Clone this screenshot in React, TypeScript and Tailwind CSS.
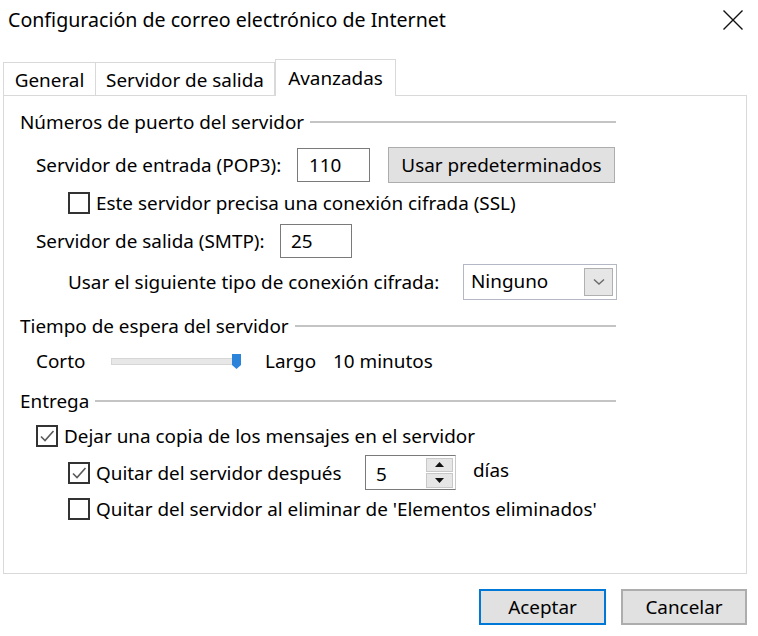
import React from "react";

const font = { fontFamily: '"Noto Sans", "Open Sans", Arial, sans-serif' };

function Check({ checked }: { checked?: boolean }) {
  return (
    <div className="w-[22px] h-[22px] border-2 border-[#333333] bg-white flex items-center justify-center shrink-0">
      {checked && (
        <svg width="16" height="16" viewBox="0 0 16 16">
          <path d="M2 8.5 L6 12.5 L14.5 3" fill="none" stroke="#5a5a5a" strokeWidth="1.6" />
        </svg>
      )}
    </div>
  );
}

function Heading({ text, mt }: { text: string; mt: string }) {
  return (
    <div className={`flex items-center h-[22px] ml-[16px] mr-[130px] ${mt}`}>
      <span>{text}</span>
      <div className="flex-1 ml-[6px] h-[2px] bg-[#c4c4c4]" />
    </div>
  );
}

export default function App() {
  return (
    <div className="w-[758px] h-[636px] bg-white text-black text-[18.9px] leading-[22px] flex flex-col" style={font}>
      {/* title bar */}
      <div className="h-[58px] flex items-start justify-between">
        <div className="ml-[8px] mt-[9px] text-[19.6px]">Configuración de correo electrónico de Internet</div>
        <svg className="mr-[14px] mt-[9px]" width="22" height="22" viewBox="0 0 22 22">
          <path d="M1.5 1.5 L20.5 20.5 M20.5 1.5 L1.5 20.5" stroke="#111" strokeWidth="1.4" />
        </svg>
      </div>
      {/* tabs */}
      <div className="flex items-end ml-[3px] h-[37px] relative z-10">
        <div className="h-[33px] w-[93px] border border-[#d9d9d9] border-b-0 flex items-center justify-center pt-[2px]">General</div>
        <div className="h-[33px] w-[179px] border border-[#d9d9d9] border-b-0 border-l-0 flex items-center justify-center pt-[2px]">Servidor de salida</div>
        <div className="h-[37px] w-[121px] border border-[#d9d9d9] border-b-0 bg-white flex items-start justify-center pt-[7px] -mb-px">Avanzadas</div>
      </div>
      {/* panel */}
      <div className="ml-[3px] w-[744px] h-[479px] border border-[#d9d9d9] flex flex-col">
        <Heading text="Números de puerto del servidor" mt="mt-[15px]" />
        <div className="flex items-center h-[36px] mt-[14px] ml-[32px]">
          <div className="w-[261px]">Servidor de entrada (POP3):</div>
          <div className="w-[73px] h-[34px] border border-[#7a7a7a] flex items-center pl-[11px]">110</div>
          <div className="ml-[18px] w-[227px] h-[36px] bg-[#e1e1e1] border border-[#adadad] flex items-center justify-center">Usar predeterminados</div>
        </div>
        <div className="flex items-center h-[22px] mt-[9px] ml-[64px] gap-[6px]">
          <Check />
          <span>Este servidor precisa una conexión cifrada (SSL)</span>
        </div>
        <div className="flex items-center h-[34px] mt-[10px] ml-[32px]">
          <div className="w-[244px]">Servidor de salida (SMTP):</div>
          <div className="w-[72px] h-[34px] border border-[#7a7a7a] flex items-center pl-[10px]">25</div>
        </div>
        <div className="flex items-center h-[36px] mt-[6px] ml-[64px]">
          <div className="w-[395px]">Usar el siguiente tipo de conexión cifrada:</div>
          <div className="w-[154px] h-[36px] border border-[#b4b8c4] flex items-center justify-between pl-[7px] pr-[3px]">
            <span className="-mt-[3px]">Ninguno</span>
            <div className="w-[29px] h-[28px] bg-[#e6e6e6] border border-[#b0b0b0] flex items-center justify-center">
              <svg width="12" height="8" viewBox="0 0 12 8">
                <path d="M1 1.5 L6 6 L11 1.5" fill="none" stroke="#6a6a6a" strokeWidth="1.4" />
              </svg>
            </div>
          </div>
        </div>
        <Heading text="Tiempo de espera del servidor" mt="mt-[15px]" />
        <div className="flex items-center h-[22px] mt-[13px] ml-[32px]">
          <div className="w-[75px]">Corto</div>
          <div className="relative w-[130px] h-[22px] flex items-center">
            <div className="w-[122px] h-[7px] bg-[#e7e7e7] border border-[#d6d6d6]" />
            <svg className="absolute left-[121px] top-[4px]" width="9" height="15" viewBox="0 0 9 15">
              <path d="M0 0 H9 V11 L4.5 15 L0 11 Z" fill="#2b83da" />
            </svg>
          </div>
          <div className="ml-[24px] w-[68px]">Largo</div>
          <div>10 minutos</div>
        </div>
        <Heading text="Entrega" mt="mt-[18px]" />
        <div className="flex items-center h-[22px] mt-[13px] ml-[32px] gap-[6px]">
          <Check checked />
          <span>Dejar una copia de los mensajes en el servidor</span>
        </div>
        <div className="flex items-center h-[35px] mt-[8px] ml-[64px]">
          <div className="flex items-center gap-[6px] w-[297px]">
            <Check checked />
            <span>Quitar del servidor después</span>
          </div>
          <div className="w-[91px] h-[35px] border border-[#7a7a7a] border-r-[#c8c8c8] flex items-center justify-between pl-[10px] pr-[2px]">
            <span className="mt-[3px]">5</span>
            <div className="w-[27px] h-[30px] flex flex-col gap-[1px]">
              <div className="flex-1 bg-[#e6e6e6] border border-[#c8c8c8] flex items-center justify-center">
                <svg width="9" height="5" viewBox="0 0 9 5"><path d="M0 5 L4.5 0 L9 5 Z" fill="#111" /></svg>
              </div>
              <div className="flex-1 bg-[#e6e6e6] border border-[#c8c8c8] flex items-center justify-center">
                <svg width="9" height="5" viewBox="0 0 9 5"><path d="M0 0 L4.5 5 L9 0 Z" fill="#111" /></svg>
              </div>
            </div>
          </div>
          <span className="ml-[17px] -mt-[5px]">días</span>
        </div>
        <div className="flex items-center h-[23px] mt-[7px] ml-[64px] gap-[6px]">
          <Check />
          <span>Quitar del servidor al eliminar de 'Elementos eliminados'</span>
        </div>
      </div>
      {/* footer buttons */}
      <div className="flex justify-end mt-[15px] mr-[11px] gap-[15px]">
        <div className="w-[127px] h-[36px] bg-[#e1e1e1] border-2 border-[#0078d7] flex items-center justify-center">Aceptar</div>
        <div className="w-[126px] h-[36px] bg-[#e1e1e1] border-2 border-[#adadad] flex items-center justify-center">Cancelar</div>
      </div>
    </div>
  );
}
